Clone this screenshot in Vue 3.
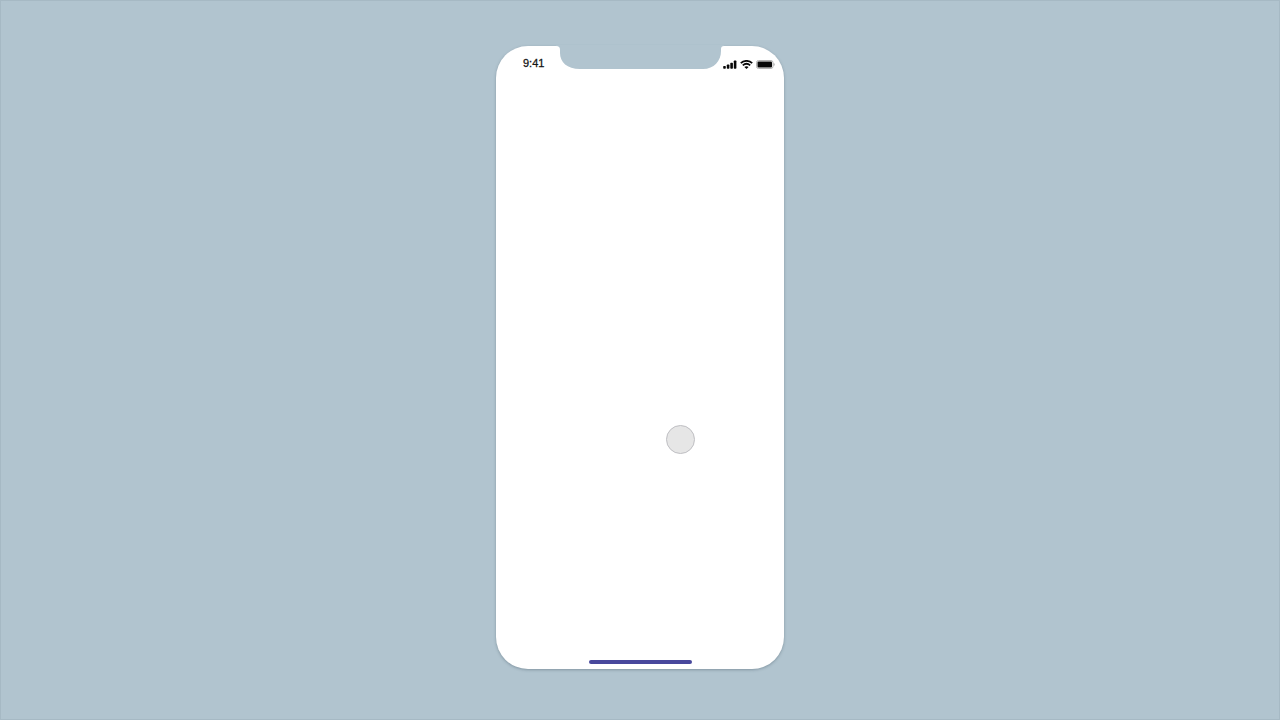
<script setup>
const time = '9:41'
</script>

<template>
  <main class="stage">
    <section class="phone" aria-label="Phone">
      <svg class="notch" viewBox="0 0 168 24" aria-hidden="true">
        <path d="M0 0H168V1C166 1 165 2 165 4V6C165 16 158 24 147 24H24C11 24 4 17 4 8V5C4 2.500 3 1 0 1Z" />
      </svg>
      <header class="status">
        <time class="time">{{ time }}</time>
        <div class="indicators">
          <svg class="signal" viewBox="0 0 14 9" role="img" aria-label="Signal">
            <rect x="0.200" y="6" width="2.600" height="2.700" rx="0.700" />
            <rect x="3.800" y="4.500" width="2.600" height="4.200" rx="0.700" />
            <rect x="7.300" y="2.700" width="2.600" height="6" rx="0.700" />
            <rect x="10.800" y="0.500" width="2.600" height="8.200" rx="0.700" />
          </svg>
          <svg class="wifi" viewBox="0 0 13 9" role="img" aria-label="Wi-Fi">
            <path class="arc" d="M0.800 3.200C4 0.100 9 0.100 12.200 3.200M2.800 5.400C5 3.400 8 3.400 10.200 5.400" />
            <path d="M6.500 8.900L4.400 6.900C5.600 5.900 7.400 5.900 8.600 6.900Z" />
          </svg>
          <svg class="battery" viewBox="0 0 19 9" role="img" aria-label="Battery">
            <rect class="case" x="0.500" y="0.500" width="16.500" height="8" rx="2" />
            <rect x="1.500" y="1.500" width="14.500" height="6" rx="1" />
            <path class="cap" d="M17.700 3C18.900 3.500 18.900 5.500 17.700 6Z" />
          </svg>
        </div>
      </header>
      <div class="touch"></div>
      <div class="home"></div>
    </section>
  </main>
</template>

<style>
body {
  margin: 0;
  background: #b1c4cf;
}
</style>

<style scoped>
.stage {
  box-sizing: border-box;
  min-height: 100vh;
  padding: 45px 16px 50px;
  display: flex;
  justify-content: center;
  background: #b1c4cf;
  border: 1px solid #a6b9c4;
}

.phone {
  position: relative;
  box-sizing: border-box;
  width: 100%;
  max-width: 288px;
  padding-bottom: 5px;
  display: flex;
  flex-direction: column;
  justify-content: space-between;
  background: #fff;
  border-radius: 32px;
  box-shadow: 0 1px 3px rgba(60, 80, 95, 0.4);
}

.notch {
  position: absolute;
  top: -1px;
  left: 60px;
  width: 168px;
  height: 24px;
  fill: #b1c4cf;
}

.status {
  display: flex;
  justify-content: space-between;
  align-items: center;
  padding: 10px 9px 0 27px;
}

.time {
  font: 11px/14px "Liberation Sans", Arial, sans-serif;
  color: #161616;
  -webkit-text-stroke: 0.3px #161616;
}

.indicators {
  display: flex;
  align-items: center;
  gap: 3px;
  padding-top: 2px;
  fill: #080808;
}

.signal {
  width: 14px;
  height: 9px;
}

.wifi {
  width: 13px;
  height: 9px;
}

.battery {
  width: 19px;
  height: 9px;
}

.arc {
  fill: none;
  stroke: #080808;
  stroke-width: 1.8px;
}

.case {
  fill: #fff;
  stroke: #b5b5b5;
  stroke-width: 1px;
}

.cap {
  fill: #999;
}

.touch {
  position: absolute;
  box-sizing: border-box;
  top: 379px;
  left: 170px;
  width: 29px;
  height: 29px;
  border: 1px solid #bfbfc3;
  border-radius: 50%;
  background: #e6e6e6;
}

.home {
  align-self: center;
  width: 103px;
  height: 4px;
  border-radius: 2px;
  background: #48489c;
}
</style>
